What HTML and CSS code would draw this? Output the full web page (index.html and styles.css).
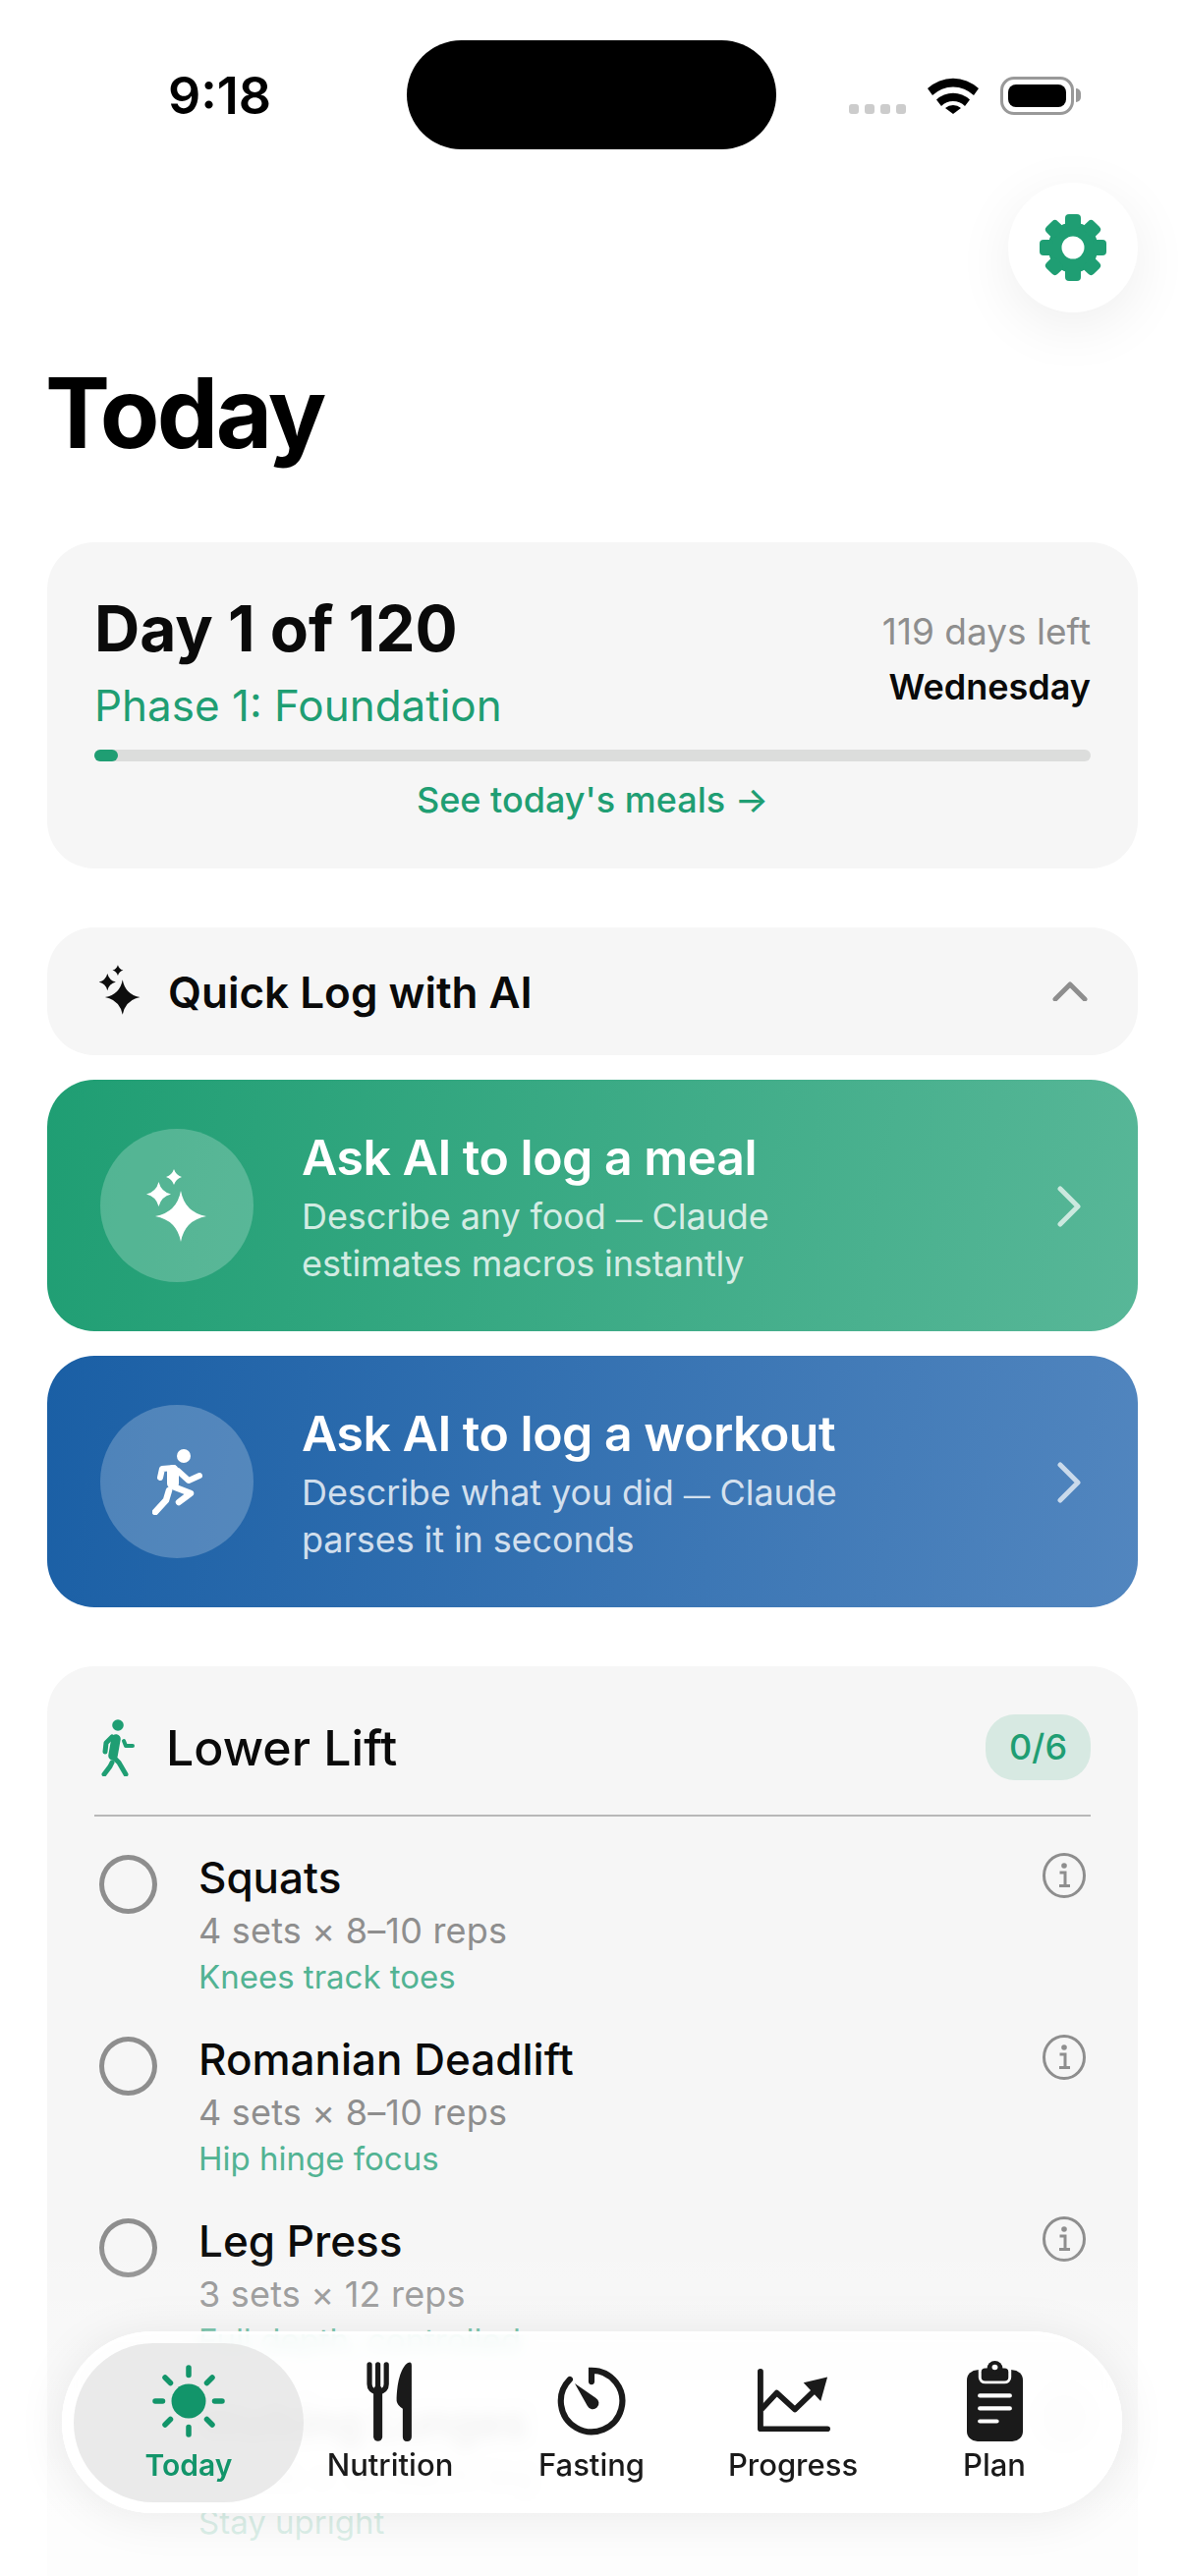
FILE: index.html
```html
<!DOCTYPE html>
<html>
<head>
    <title>Today</title>
    <link rel="stylesheet" href="styles.css">
</head>
<body>
    <div class="status-bar">
        <span class="time">9:18</span>
        <div class="island"></div>
        <div class="status-icons">
            <div class="signal"><i></i><i></i><i></i><i></i></div>
            <svg class="wifi" viewBox="0 0 52 38"><path d="M0 12 A38 38 0 0 1 52 12 L47 19 A30 30 0 0 0 5 19 Z"/><path d="M9 23.500 A25 25 0 0 1 43 23.500 L38 30 A17 17 0 0 0 14 30 Z"/><path d="M18 32 A12 12 0 0 1 34 32 L26 38 Z"/></svg>
            <div class="battery"><div class="battery-fill"></div></div>
            <div class="battery-tip"></div>
        </div>
    </div>

    <div class="gear-row">
        <div class="gear-button">
            <svg viewBox="-34 -34 68 68" width="68" height="68" fill="#1f9e73">
                <circle r="18.500" fill="none" stroke="#1f9e73" stroke-width="14"/>
                <rect x="-8" y="-34" width="16" height="14" rx="4"/>
                <rect x="-8" y="-34" width="16" height="14" rx="4" transform="rotate(45)"/>
                <rect x="-8" y="-34" width="16" height="14" rx="4" transform="rotate(90)"/>
                <rect x="-8" y="-34" width="16" height="14" rx="4" transform="rotate(135)"/>
                <rect x="-8" y="-34" width="16" height="14" rx="4" transform="rotate(180)"/>
                <rect x="-8" y="-34" width="16" height="14" rx="4" transform="rotate(225)"/>
                <rect x="-8" y="-34" width="16" height="14" rx="4" transform="rotate(270)"/>
                <rect x="-8" y="-34" width="16" height="14" rx="4" transform="rotate(315)"/>
            </svg>
        </div>
    </div>

    <main class="content">
        <h1 class="page-title">Today</h1>

        <section class="card day-card">
            <div class="day-top">
                <div>
                    <div class="day-count">Day 1 of 120</div>
                    <div class="day-phase">Phase 1: Foundation</div>
                </div>
                <div class="day-side">
                    <div class="days-left">119 days left</div>
                    <div class="weekday">Wednesday</div>
                </div>
            </div>
            <div class="progress"><div class="progress-fill"></div></div>
            <div class="meals-link">See today's meals →</div>
        </section>

        <section class="card quick-card">
            <svg class="quick-icon" viewBox="0 0 70 80" fill="#0d0d0d">
                <path d="M39 25 Q43 47 65 51 Q43 55 39 77 Q35 55 13 51 Q35 47 39 25Z"/>
                <path d="M16.500 16 Q19 26 29 28.500 Q19 31 16.500 41 Q14 31 4 28.500 Q14 26 16.500 16Z"/>
                <path d="M32 3 Q34 9 40 11 Q34 13 32 19 Q30 13 24 11 Q30 9 32 3Z"/>
            </svg>
            <span class="quick-title">Quick Log with AI</span>
            <svg class="quick-chevron" viewBox="0 0 36 20"><path d="M3 18 L18 3 L33 18"/></svg>
        </section>

        <section class="ask-card ask-green">
            <div class="ask-circle">
                <svg viewBox="0 0 70 80" width="70" height="80" fill="#fff">
                    <path d="M39 25 Q43 47 65 51 Q43 55 39 77 Q35 55 13 51 Q35 47 39 25Z"/>
                    <path d="M16.500 16 Q19 26 29 28.500 Q19 31 16.500 41 Q14 31 4 28.500 Q14 26 16.500 16Z"/>
                    <path d="M32 3 Q34 9 40 11 Q34 13 32 19 Q30 13 24 11 Q30 9 32 3Z"/>
                </svg>
            </div>
            <div class="ask-text">
                <div class="ask-title">Ask AI to log a meal</div>
                <div class="ask-sub">Describe any food <span class="dash">—</span> Claude<br>estimates macros instantly</div>
            </div>
            <svg class="ask-chevron" viewBox="0 0 24 42"><path d="M3 3 L21 21 L3 39"/></svg>
        </section>

        <section class="ask-card ask-blue">
            <div class="ask-circle">
                <svg viewBox="0 0 51 67" width="51" height="67" fill="none" stroke="#fff" stroke-linecap="round" stroke-linejoin="round">
                    <circle cx="32" cy="7" r="7" fill="#fff" stroke="none"/>
                    <path d="M21 22 L21 35" stroke-width="12"/>
                    <path d="M22 19 L10 20 L8 29" stroke-width="6"/>
                    <path d="M26 22 L37 32 L48 27" stroke-width="6"/>
                    <path d="M21 38 L39 45 L27 54" stroke-width="6.500"/>
                    <path d="M17 42 L14 52 L3 64" stroke-width="6.500"/>
                </svg>
            </div>
            <div class="ask-text">
                <div class="ask-title">Ask AI to log a workout</div>
                <div class="ask-sub">Describe what you did <span class="dash">—</span> Claude<br>parses it in seconds</div>
            </div>
            <svg class="ask-chevron" viewBox="0 0 24 42"><path d="M3 3 L21 21 L3 39"/></svg>
        </section>

        <section class="card workout-card">
            <div class="workout-header">
                <svg class="walker" viewBox="0 0 35 58" fill="none" stroke="#1f9e73" stroke-linecap="round" stroke-linejoin="round">
                    <circle cx="17" cy="6" r="5.800" fill="#1f9e73" stroke="none"/>
                    <path d="M15 20 L12 37" stroke-width="9.500"/>
                    <path d="M11 18 L5 24 L4 33" stroke-width="5"/>
                    <path d="M23 22 L25 27 L32 27" stroke-width="4"/>
                    <path d="M12 38 L18 44 L25 56" stroke-width="5"/>
                    <path d="M11 44 L9 48 L3 56" stroke-width="5"/>
                </svg>
                <span class="workout-title">Lower Lift</span>
                <span class="workout-badge">0/6</span>
            </div>
            <div class="exercise-list">
                <div class="exercise">
                    <div class="check"></div>
                    <div class="exercise-text">
                        <div class="exercise-name">Squats</div>
                        <div class="exercise-sets">4 sets × 8–10 reps</div>
                        <div class="exercise-hint">Knees track toes</div>
                    </div>
                    <svg class="info" viewBox="0 0 44 46"><ellipse cx="22" cy="23" rx="20.500" ry="21.500"/><circle class="info-dot" cx="22" cy="13" r="2.800"/><path d="M17.500 20 H23 V33 M17 33.500 H28"/></svg>
                </div>
                <div class="exercise">
                    <div class="check"></div>
                    <div class="exercise-text">
                        <div class="exercise-name">Romanian Deadlift</div>
                        <div class="exercise-sets">4 sets × 8–10 reps</div>
                        <div class="exercise-hint">Hip hinge focus</div>
                    </div>
                    <svg class="info" viewBox="0 0 44 46"><ellipse cx="22" cy="23" rx="20.500" ry="21.500"/><circle class="info-dot" cx="22" cy="13" r="2.800"/><path d="M17.500 20 H23 V33 M17 33.500 H28"/></svg>
                </div>
                <div class="exercise">
                    <div class="check"></div>
                    <div class="exercise-text">
                        <div class="exercise-name">Leg Press</div>
                        <div class="exercise-sets">3 sets × 12 reps</div>
                        <div class="exercise-hint">Full depth, controlled</div>
                    </div>
                    <svg class="info" viewBox="0 0 44 46"><ellipse cx="22" cy="23" rx="20.500" ry="21.500"/><circle class="info-dot" cx="22" cy="13" r="2.800"/><path d="M17.500 20 H23 V33 M17 33.500 H28"/></svg>
                </div>
                <div class="exercise">
                    <div class="check"></div>
                    <div class="exercise-text">
                        <div class="exercise-name">Walking Lunges</div>
                        <div class="exercise-sets">2 sets × 10 each leg</div>
                        <div class="exercise-hint">Stay upright</div>
                    </div>
                    <svg class="info" viewBox="0 0 44 46"><ellipse cx="22" cy="23" rx="20.500" ry="21.500"/><circle class="info-dot" cx="22" cy="13" r="2.800"/><path d="M17.500 20 H23 V33 M17 33.500 H28"/></svg>
                </div>
            </div>
        </section>
    </main>

    <div class="bottom-fade"></div>

    <nav class="tab-bar">
        <div class="tab tab-active">
            <div class="tab-icon">
                <svg viewBox="0 0 74 74" width="74" height="74" fill="none" stroke="#12956a" stroke-width="5.500" stroke-linecap="round">
                    <circle cx="37" cy="37" r="17.500" fill="#12956a" stroke="none"/>
                    <path d="M37 3 V10.500 M37 63.500 V71 M3 37 H10.500 M63.500 37 H71 M13 13 L18.500 18.500 M55.500 55.500 L61 61 M13 61 L18.500 55.500 M55.500 18.500 L61 13"/>
                </svg>
            </div>
            <span class="tab-label">Today</span>
        </div>
        <div class="tab">
            <div class="tab-icon">
                <svg viewBox="0 0 50 85" width="48" height="81" fill="#1a1a1a">
                    <path d="M3 3 V24 Q3 31 12 33 Q21 31 21 24 V3 M12 3 V33" fill="none" stroke="#1a1a1a" stroke-width="5.500" stroke-linecap="round"/>
                    <path d="M12 30 V80" fill="none" stroke="#1a1a1a" stroke-width="9.500" stroke-linecap="round"/>
                    <path d="M48 4 Q48 -1 44 1 C36 6 32 24 32 42 Q33 47 38.500 50 V80 Q38.500 85 43 85 Q48 85 48 80 Z"/>
                </svg>
            </div>
            <span class="tab-label">Nutrition</span>
        </div>
        <div class="tab">
            <div class="tab-icon">
                <svg viewBox="0 0 76 76" width="72" height="72" fill="#1a1a1a">
                    <path d="M38 17 V5 A33 33 0 1 1 14.700 14.700" fill="none" stroke="#1a1a1a" stroke-width="6.500" stroke-linecap="round"/>
                    <path d="M20 19 L42.500 34.500 A6.500 6.500 0 1 1 33.500 43 Z"/>
                </svg>
            </div>
            <span class="tab-label">Fasting</span>
        </div>
        <div class="tab">
            <div class="tab-icon chart-icon">
                <svg viewBox="0 0 76 70" width="74" height="66" preserveAspectRatio="none" fill="#1a1a1a">
                    <path d="M3 3 V65 H73" fill="none" stroke="#1a1a1a" stroke-width="6" stroke-linecap="round" stroke-linejoin="round"/>
                    <path d="M4 44 L20 26 L39 44 L60 23" fill="none" stroke="#1a1a1a" stroke-width="6" stroke-linejoin="round"/>
                    <path d="M73 9 L48 15 L66 35 Z"/>
                </svg>
            </div>
            <span class="tab-label">Progress</span>
        </div>
        <div class="tab">
            <div class="tab-icon">
                <svg viewBox="0 0 58 88" width="57" height="82" preserveAspectRatio="none" fill="#1a1a1a">
                    <rect x="0" y="10" width="58" height="78" rx="11"/>
                    <rect x="12" y="4" width="34" height="21" rx="7" fill="#fff"/>
                    <rect x="15" y="8" width="28" height="14" rx="4"/>
                    <circle cx="29" cy="8" r="8"/>
                    <circle cx="29" cy="7" r="3" fill="#fff"/>
                    <path d="M13.500 38 H44.500 M13.500 52 H44.500 M13.500 66 H31" stroke="#fff" stroke-width="4.500" stroke-linecap="round"/>
                </svg>
            </div>
            <span class="tab-label">Plan</span>
        </div>
    </nav>
</body>
</html>
```

FILE: styles.css
```css
* {
    box-sizing: border-box;
}
body {
    position: relative;
    width: 1206px;
    height: 2622px;
    margin: 0;
    overflow: hidden;
    background-color: #fff;
    font-family: Inter, "Liberation Sans", sans-serif;
    color: #0a0a0a;
}

/* status bar */
.status-bar {
    display: flex;
    height: 152px;
    padding: 41px 0 0 171px;
}
.time {
    width: 101px;
    margin-top: 27px;
    font-size: 52px;
    line-height: 60px;
    font-weight: 600;
    color: #000;
}
.island {
    width: 376px;
    height: 111px;
    margin-left: 142px;
    border-radius: 56px;
    background-color: #000;
}
.status-icons {
    display: flex;
    align-items: flex-start;
    margin-left: 74px;
    padding-top: 37px;
}
.signal {
    display: flex;
    gap: 6px;
    margin-top: 28px;
}
.signal i {
    width: 10px;
    height: 10px;
    border-radius: 3px;
    background-color: #ccc;
}
.wifi {
    width: 52px;
    height: 38px;
    margin-left: 22px;
}
.battery {
    width: 75px;
    height: 39px;
    margin-left: 22px;
    padding: 5px;
    border: 3px solid #999;
    border-radius: 14px;
}
.battery-fill {
    height: 100%;
    border-radius: 8px;
    background-color: #000;
}
.battery-tip {
    width: 5px;
    height: 14px;
    margin: 12px 0 0 2px;
    border-radius: 0 5px 5px 0;
    background-color: #999;
}

/* settings button */
.gear-row {
    display: flex;
    justify-content: flex-end;
    padding: 34px 48px 0 0;
}
.gear-button {
    display: flex;
    align-items: center;
    justify-content: center;
    width: 132px;
    height: 132px;
    border-radius: 50%;
    background-color: #fff;
    box-shadow: 0 14px 60px rgba(0, 0, 0, 0.07);
}

.content {
    padding: 0 48px;
}
.page-title {
    margin: 52px 0 82px -2px;
    font-size: 99px;
    line-height: 100px;
    font-weight: 700;
    letter-spacing: -2.6px;
    color: #000;
}
.card {
    border-radius: 48px;
    background-color: #f6f6f6;
}

/* day card */
.day-card {
    height: 332px;
    padding: 53px 48px 0 48px;
}
.day-top {
    display: flex;
    justify-content: space-between;
}
.day-count {
    font-size: 64px;
    line-height: 70px;
    font-weight: 700;
}
.day-phase {
    margin-top: 16px;
    font-size: 44px;
    line-height: 54px;
    color: #1f9e73;
}
.day-side {
    padding-top: 16px;
    text-align: right;
}
.days-left {
    font-size: 37px;
    line-height: 44px;
    color: #8e8e8e;
}
.weekday {
    margin-top: 12px;
    font-size: 36px;
    line-height: 44px;
    font-weight: 600;
}
.progress {
    height: 12px;
    margin-top: 18px;
    border-radius: 6px;
    background-color: #dcdddc;
}
.progress-fill {
    width: 24px;
    height: 100%;
    border-radius: 6px;
    background-color: #1f9e73;
}
.meals-link {
    margin-top: 17px;
    font-size: 36px;
    line-height: 44px;
    font-weight: 500;
    text-align: center;
    color: #1f9e73;
}

/* quick log */
.quick-card {
    display: flex;
    align-items: center;
    height: 130px;
    margin-top: 60px;
    padding: 2px 51px 0 50px;
}
.quick-icon {
    width: 48px;
    height: 55px;
    margin-top: -6px;
}
.quick-title {
    margin-left: 25px;
    font-size: 44px;
    font-weight: 600;
}
.quick-chevron {
    width: 36px;
    height: 20px;
    margin-left: auto;
    margin-top: -2px;
    fill: none;
    stroke: #8e8e8e;
    stroke-width: 5;
    stroke-linecap: round;
    stroke-linejoin: round;
}

/* ask cards */
.ask-card {
    display: flex;
    align-items: center;
    height: 256px;
    margin-top: 25px;
    padding: 0 58px 0 54px;
    border-radius: 48px;
    color: #fff;
}
.ask-green {
    background: linear-gradient(100deg, #1f9e73, #58b798);
}
.ask-blue {
    background: linear-gradient(100deg, #1a5fa5, #5286bf);
}
.ask-circle {
    display: flex;
    align-items: center;
    justify-content: center;
    flex-shrink: 0;
    width: 156px;
    height: 156px;
    border-radius: 50%;
    background-color: rgba(255, 255, 255, 0.22);
}
.ask-text {
    margin: 4px 0 0 49px;
}
.ask-title {
    font-size: 50px;
    line-height: 60px;
    font-weight: 600;
    letter-spacing: -0.5px;
}
.ask-sub {
    margin-top: 6px;
    font-size: 36px;
    line-height: 48.5px;
    letter-spacing: -0.1px;
    color: rgba(255, 255, 255, 0.8);
}
.dash {
    font-size: 27px;
    line-height: 0;
}
.ask-chevron {
    width: 24px;
    height: 42px;
    margin-left: auto;
    margin-top: 2px;
    fill: none;
    stroke: rgba(255, 255, 255, 0.7);
    stroke-width: 5;
    stroke-linecap: round;
    stroke-linejoin: round;
}

/* workout */
.workout-card {
    height: 1000px;
    margin-top: 60px;
    padding: 50px 48px 0 48px;
}
.workout-header {
    display: flex;
    align-items: center;
    height: 103px;
    padding: 0 0 36px 7px;
    border-bottom: 2px solid #b8b8b8;
}
.walker {
    width: 35px;
    height: 58px;
}
.workout-title {
    margin-left: 31px;
    font-size: 50px;
    font-weight: 500;
}
.workout-badge {
    margin-left: auto;
    width: 107px;
    height: 67px;
    border-radius: 30px;
    background-color: #d7e9e2;
    font-size: 36px;
    line-height: 67px;
    font-weight: 500;
    text-align: center;
    color: #1f9e73;
}
.exercise-list {
    display: flex;
    flex-direction: column;
    gap: 39px;
    margin-top: 37px;
}
.exercise {
    display: flex;
    align-items: flex-start;
    padding: 0 5px;
}
.check {
    flex-shrink: 0;
    width: 59px;
    height: 60px;
    margin-top: 2px;
    border: 5px solid #8e8e8e;
    border-radius: 50%;
}
.exercise-text {
    flex: 1;
    margin-left: 42px;
}
.exercise-name {
    font-size: 44px;
    line-height: 50px;
    font-weight: 500;
}
.exercise-sets {
    margin-top: 7px;
    font-size: 36px;
    line-height: 44px;
    letter-spacing: 0.2px;
    color: #8e8e8e;
}
.exercise-hint {
    margin-top: 5px;
    font-size: 33px;
    line-height: 40px;
    color: #52b393;
}
.info {
    width: 44px;
    height: 46px;
    fill: none;
    stroke: #8e8e8e;
    stroke-width: 3;
}
.info-dot {
    fill: #8e8e8e;
    stroke: none;
}

/* bottom fade and tab bar */
.bottom-fade {
    position: absolute;
    left: 0;
    right: 0;
    bottom: 0;
    height: 340px;
    background: linear-gradient(rgba(255, 255, 255, 0), rgba(255, 255, 255, 0.8) 85%);
}
.tab-bar {
    position: absolute;
    left: 63px;
    top: 2373px;
    display: flex;
    width: 1079px;
    height: 185px;
    padding: 12px 0 0 12px;
    border-radius: 92px;
    background-color: rgba(255, 255, 255, 0.86);
    backdrop-filter: blur(8px);
    box-shadow: inset 0 0 0 3px #fff, 0 4px 50px rgba(0, 0, 0, 0.08);
}
.tab {
    display: flex;
    flex-direction: column;
    align-items: center;
    width: 205px;
    height: 162px;
    font-size: 31px;
    font-weight: 500;
    color: #1a1a1a;
}
.tab-active {
    width: 234px;
    margin: 0 -14.5px 0 0;
    border-radius: 81px;
    background-color: rgba(225, 225, 225, 0.7);
    font-size: 30px;
    font-weight: 600;
    color: #12956a;
}
.tab-icon {
    display: flex;
    align-items: center;
    justify-content: center;
    height: 84px;
    margin-top: 17px;
}
.chart-icon {
    padding-left: 2px;
}
.tab-label {
    margin-top: 5px;
    line-height: 36px;
}
```
